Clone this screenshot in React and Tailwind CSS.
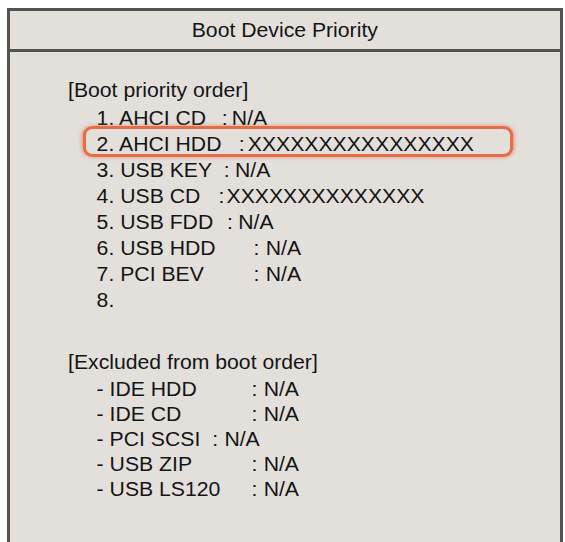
import React from "react";

const priority = [
  { label: "1. AHCI CD", w: "w-[118px]", gap: "ml-[4px]", value: "N/A" },
  { label: "2. AHCI HDD", w: "w-[134px]", gap: "ml-[3px]", value: "XXXXXXXXXXXXXXXX", hot: true },
  { label: "3. USB KEY", w: "w-[120px]", gap: "ml-[5px]", value: "N/A" },
  { label: "4. USB CD", w: "w-[115px]", gap: "ml-[2px]", value: "XXXXXXXXXXXXXX" },
  { label: "5. USB FDD", w: "w-[123px]", gap: "ml-[5px]", value: "N/A" },
  { label: "6. USB HDD", w: "w-[148px]", gap: "ml-[6px]", value: "N/A" },
  { label: "7. PCI BEV", w: "w-[148px]", gap: "ml-[6px]", value: "N/A" },
  { label: "8." },
];

const excluded = [
  { label: "- IDE HDD", w: "w-[146px]" },
  { label: "- IDE CD", w: "w-[146px]" },
  { label: "- PCI SCSI", w: "w-[109px]" },
  { label: "- USB ZIP", w: "w-[146px]" },
  { label: "- USB LS120", w: "w-[146px]" },
];

function Row({ label, w, gap, value, hot }) {
  return (
    <div className="relative flex whitespace-pre">
      {hot && (
        <span className="absolute -top-[5px] bottom-0 -left-[13px] w-[406px] rounded-[9px] border-[3px] border-[#e76d48] shadow-[0_0_4px_rgba(231,109,72,0.7)]" />
      )}
      <span className={value ? w : ""}>{label}</span>
      {value && (
        <>
          <span>:</span>
          <span className={gap}>{value}</span>
        </>
      )}
    </div>
  );
}

export default function App() {
  return (
    <div className="h-[542px] overflow-hidden bg-white pt-[8px] pl-[7px] font-['Liberation_Sans',Arial,sans-serif] text-[20px] text-[#141414]">
      <div className="w-[556px] h-[560px] border-[3px] border-b-0 border-[#535353] bg-[#e3e0dc]">
        {/* title bar */}
        <div className="h-[41px] border-b-[3px] border-[#535353] flex items-center justify-center">
          <span className="inline-block scale-x-[1.06] leading-none">Boot Device Priority</span>
        </div>

        <div className="pt-[25px] pl-[58px]">
          <div className="origin-top-left scale-x-[1.06]">
            <div className="leading-[26px] mb-[2px]">[Boot priority order]</div>
            <div className="pl-[27px] leading-[26px]">
              {priority.map((r) => (
                <Row key={r.label} {...r} />
              ))}
            </div>

            <div className="leading-[26px] mt-[36px] mb-[2px]">[Excluded from boot order]</div>
            <div className="pl-[27px] leading-[25px]">
              {excluded.map((r) => (
                <Row key={r.label} {...r} gap="ml-[6px]" value="N/A" />
              ))}
            </div>
          </div>
        </div>
      </div>
    </div>
  );
}
